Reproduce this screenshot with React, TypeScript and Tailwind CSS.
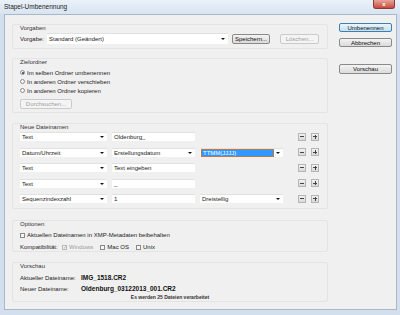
import React from 'react';

const font = { fontFamily: '"Liberation Sans", Arial, sans-serif' };

function Arrow() {
  return <span className="w-0 h-0 border-l-[2px] border-r-[2px] border-t-[2px] border-l-transparent border-r-transparent border-t-[#111] shrink-0" />;
}

function Select({ value, w, h = 'h-[9px]', focused = false }: { value: string; w: string; h?: string; focused?: boolean }) {
  return (
    <div className={`${w} ${h} bg-white border-t border-[#e1e1e1] flex items-center pl-[1px] pr-[3px] gap-[2px] shrink-0`}>
      {focused ? (
        <div className="flex-1 h-full bg-[#3399ff] border border-[#b7794c] text-white flex items-center pl-[1px] leading-none">{value}</div>
      ) : (
        <div className="flex-1 pl-[1px] text-[#222] leading-none">{value}</div>
      )}
      <Arrow />
    </div>
  );
}

function Field({ value, w }: { value: string; w: string }) {
  return (
    <div className={`${w} h-[9px] bg-white border-t border-[#e1e1e1] flex items-center pl-[2px] text-[#222] leading-none shrink-0`}>{value}</div>
  );
}

function Button({ label, w, h = 'h-[10px]', disabled = false, primary = false }: { label: string; w: string; h?: string; disabled?: boolean; primary?: boolean }) {
  const look = disabled
    ? 'border-[#c8cbce] bg-[#f4f4f4] text-[#a0a0a0]'
    : primary
    ? 'border-[#3c7fb1] bg-gradient-to-b from-[#eaf6fd] to-[#c6dff0] text-[#111]'
    : 'border-[#8a8a8a] bg-gradient-to-b from-[#f4f4f4] to-[#dadada] text-[#111]';
  return (
    <div className={`${w} ${h} border rounded-[2px] flex items-center justify-center leading-none shrink-0 ${look}`}>{label}</div>
  );
}

function Group({ title, className, children }: { title: string; className: string; children?: React.ReactNode }) {
  return (
    <div className={`border border-[#e4e4e4] rounded-[2px] px-[7px] flex flex-col ${className}`}>
      <div className="h-[7px] leading-[7px] text-[#333]">{title}</div>
      {children}
    </div>
  );
}

function Radio({ checked, label }: { checked?: boolean; label: string }) {
  return (
    <div className="h-[9px] flex items-center gap-[2px]">
      <span className="w-[5px] h-[5px] rounded-full border border-[#8a8a8a] bg-[#f6f6f6] flex items-center justify-center">
        {checked && <span className="w-[2px] h-[2px] rounded-full bg-[#1d3f66]" />}
      </span>
      <span className="leading-none text-[#222]">{label}</span>
    </div>
  );
}

function Check({ label, disabled = false, checked = false }: { label: string; disabled?: boolean; checked?: boolean }) {
  return (
    <div className="flex items-center gap-[2px]">
      <span className={`w-[5px] h-[5px] border ${disabled ? 'border-[#b8b8b8]' : 'border-[#8a8a8a]'} bg-[#f6f6f6] flex items-center justify-center text-[5px] leading-none ${disabled ? 'text-[#a0a0a0]' : 'text-[#222]'}`}>
        {checked ? '✓' : ''}
      </span>
      <span className={`leading-none ${disabled ? 'text-[#9a9a9a]' : 'text-[#222]'}`}>{label}</span>
    </div>
  );
}

function PlusMinus() {
  return (
    <div className="flex items-center gap-[5px] ml-[15px]">
      <div className="w-[8px] h-[8px] border border-[#b5b5b5] bg-gradient-to-b from-[#f2f2f2] to-[#d9d9d9] flex items-center justify-center">
        <span className="w-[4px] h-[1px] bg-[#444]" />
      </div>
      <div className="w-[8px] h-[8px] border border-[#b5b5b5] bg-gradient-to-b from-[#f2f2f2] to-[#d9d9d9] flex items-center justify-center relative">
        <span className="w-[4px] h-[1px] bg-[#444]" />
        <span className="absolute w-[1px] h-[4px] bg-[#444]" />
      </div>
    </div>
  );
}

const rows = [
  { a: 'Text', b: 'Oldenburg_' },
  { a: 'Datum/Uhrzeit', b: 'Erstellungsdatum', bSelect: true, c: 'TTMM(JJJJ)', focused: true },
  { a: 'Text', b: 'Text eingeben' },
  { a: 'Text', b: '_' },
  { a: 'Sequenzindexzahl', b: '1', c: 'Dreistellig' },
];

export default function App() {
  return (
    <div className="w-[400px] h-[315px] bg-[#d3dfec] flex flex-col text-[6px]" style={font}>
      {/* title bar */}
      <div className="h-[14px] flex items-start justify-between pl-[4px] pr-[5px] bg-gradient-to-b from-[#eaf1f9] to-[#d8e4f1]">
        <span className="mt-[4px] leading-none text-[#1a1a1a] text-[6.5px]">Stapel-Umbenennung</span>
        <div className="w-[22px] h-[9px] rounded-b-[3px] border border-t-0 border-[#8a3a3a] bg-gradient-to-b from-[#e6a49a] to-[#c8483c] flex items-center justify-center text-white text-[6px] font-bold leading-none">x</div>
      </div>

      <div className="flex-1 ml-[4px] mr-[3px] mb-[5px] bg-[#f0f0f0] border border-[#a7b8cb] flex">
        {/* left column */}
        <div className="w-[316px] ml-[7px] pt-[9px] flex flex-col">
          <Group title="Vorgaben" className="h-[25px]">
            <div className="mt-[1px] flex items-center">
              <span className="w-[27px] leading-none text-[#222]">Vorgabe:</span>
              <Select value="Standard (Geändert)" w="w-[181px]" h="h-[11px]" />
              <div className="ml-[4px]"><Button label="Speichern..." w="w-[38px]" /></div>
              <div className="ml-[10px]"><Button label="Löschen..." w="w-[39px]" disabled /></div>
            </div>
          </Group>

          <Group title="Zielordner" className="h-[55px] mt-[9px]">
            <div className="mt-[2px]">
              <Radio checked label="Im selben Ordner umbenennen" />
              <Radio label="In anderen Ordner verschieben" />
              <Radio label="In anderen Ordner kopieren" />
            </div>
            <div className="mt-[4px]"><Button label="Durchsuchen..." w="w-[52px]" disabled /></div>
          </Group>

          <Group title="Neue Dateinamen" className="h-[86px] mt-[10px]">
            <div className="mt-[1px] flex flex-col gap-[6.5px]">
              {rows.map((r, i) => (
                <div key={i} className="flex items-center">
                  <Select value={r.a} w="w-[87px]" />
                  <div className="ml-[5px]">
                    {r.bSelect ? <Select value={r.b} w="w-[83px]" /> : <Field value={r.b} w="w-[83px]" />}
                  </div>
                  <div className="ml-[5px] w-[83px]">
                    {r.c && <Select value={r.c} w="w-[83px]" focused={r.focused} />}
                  </div>
                  <PlusMinus />
                </div>
              ))}
            </div>
          </Group>

          <Group title="Optionen" className="h-[32px] mt-[11px]">
            <div className="mt-[4px]"><Check label="Aktuellen Dateinamen in XMP-Metadaten beibehalten" /></div>
            <div className="mt-[6px] flex items-center">
              <span className="w-[42px] leading-none text-[#222]">Kompatibilität:</span>
              <Check label="Windows" disabled checked />
              <div className="ml-[7px]"><Check label="Mac OS" /></div>
              <div className="ml-[7px]"><Check label="Unix" /></div>
            </div>
          </Group>

          <Group title="Vorschau" className="h-[40px] mt-[10px]">
            <div className="mt-[4px] flex items-center h-[8px]">
              <span className="w-[61px] leading-none text-[#222]">Aktueller Dateiname:</span>
              <span className="font-bold text-[6.5px] leading-none text-[#111]">IMG_1518.CR2</span>
            </div>
            <div className="mt-[3px] flex items-center h-[8px]">
              <span className="w-[61px] leading-none text-[#222]">Neuer Dateiname:</span>
              <span className="font-bold text-[6.5px] leading-none text-[#111]">Oldenburg_03122013_001.CR2</span>
            </div>
            <div className="mt-[2px] text-center font-bold text-[5px] leading-none text-[#333]">Es werden 25 Dateien verarbeitet</div>
          </Group>
        </div>

        {/* right column */}
        <div className="ml-[11px] pt-[8px] flex flex-col">
          <Button label="Umbenennen" w="w-[53px]" h="h-[9px]" primary />
          <div className="mt-[6px]"><Button label="Abbrechen" w="w-[53px]" h="h-[9px]" /></div>
          <div className="mt-[17px]"><Button label="Vorschau" w="w-[53px]" h="h-[10px]" /></div>
        </div>
      </div>
    </div>
  );
}
